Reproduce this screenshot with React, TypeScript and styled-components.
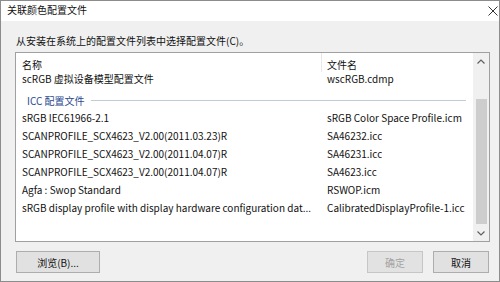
import React from "react";
import styled, { createGlobalStyle } from "styled-components";

const GlobalStyle = createGlobalStyle`
  html, body {
    margin: 0;
    padding: 0;
    background: #ffffff;
  }
  body {
    font-family: "Noto Sans CJK SC", "Noto Sans", sans-serif;
    font-size: 10px;
    color: #111111;
  }
  * {
    box-sizing: border-box;
  }
`;

const Window = styled.div`
  width: 500px;
  height: 282px;
  border: 1px solid #8c8c8c;
  background: #f0f0f0;
  display: flex;
  flex-direction: column;
  overflow: hidden;
`;

const TitleBar = styled.div`
  height: 20px;
  background: #ffffff;
  display: flex;
  align-items: center;
  justify-content: space-between;
  padding: 0 1px 3px 6px;
  font-size: 10px;
`;

const CloseIcon = styled.svg`
  display: block;
  margin-top: 2px;
`;

const Body = styled.div`
  flex: 1;
  display: flex;
  flex-direction: column;
  padding: 0 9px 0 14px;
`;

const Prompt = styled.div`
  margin: 13px 0 4px 1px;
  line-height: 14px;
`;

const ListBox = styled.div`
  height: 190px;
  border: 1px solid #a0a0a0;
  background: #ffffff;
  display: flex;
`;

const ListContent = styled.div`
  flex: 1;
  overflow: hidden;
`;

const Row = styled.div<{ $header?: boolean; $compact?: boolean }>`
  display: flex;
  height: ${(p) => (p.$header ? "19px" : p.$compact ? "14px" : "18px")};
  line-height: 14px;
  padding-top: ${(p) => (p.$header ? "5px" : "0")};
  align-items: ${(p) => (p.$header ? "flex-start" : "center")};
  white-space: nowrap;
`;

const NameCell = styled.div<{ $header?: boolean }>`
  width: 306px;
  flex: none;
  padding-left: 6px;
  overflow: hidden;
  align-self: stretch;
  border-right: ${(p) => (p.$header ? "1px solid #e8e8e8" : "none")};
  margin-top: ${(p) => (p.$header ? "-5px" : "0")};
  padding-top: ${(p) => (p.$header ? "5px" : "0")};
  display: flex;
  align-items: ${(p) => (p.$header ? "flex-start" : "center")};
`;

const FileCell = styled.div`
  padding-left: 5px;
  overflow: hidden;
`;

const GroupRow = styled.div`
  display: flex;
  align-items: center;
  height: 23px;
  padding: 5px 7px 0 11px;
  color: #2c4a8f;
`;

const GroupLine = styled.div`
  flex: 1;
  height: 0;
  margin: 1px 0 0 6px;
  border-top: 1px solid #c3cbd5;
`;

const Scrollbar = styled.div`
  width: 16px;
  background: #f0f0f0;
  display: flex;
  flex-direction: column;
`;

const ArrowButton = styled.div`
  height: 16px;
  display: flex;
  align-items: center;
  justify-content: center;
`;

const Track = styled.div`
  flex: 1;
  padding: 30px 2px 0 3px;
`;

const Thumb = styled.div`
  height: 125px;
  background: #cdcdcd;
`;

const Footer = styled.div`
  display: flex;
  justify-content: space-between;
  margin-top: 9px;
  padding: 0 1px;
`;

const ButtonGroup = styled.div`
  display: flex;
  gap: 10px;
`;

const Button = styled.button<{ $wide?: boolean }>`
  width: ${(p) => (p.$wide ? "84px" : "56px")};
  height: 22px;
  padding: 0;
  border: 1px solid ${(p) => (p.disabled ? "#c6c6c6" : "#adadad")};
  background: ${(p) => (p.disabled ? "#e2e2e2" : "#e1e1e1")};
  color: ${(p) => (p.disabled ? "#a3a3a3" : "#111111")};
  font-family: "Noto Sans CJK SC", "Noto Sans", sans-serif;
  font-size: 10px;
`;

const Chevron = ({ up }: { up?: boolean }) => (
  <svg width="8" height="5" viewBox="0 0 8 5">
    <path
      d={up ? "M0.5 4.5 L4 1 L7.5 4.5" : "M0.5 0.5 L4 4 L7.5 0.5"}
      fill="none"
      stroke="#606060"
      strokeWidth="1.2"
    />
  </svg>
);

const iccRows: [string, string][] = [
  ["sRGB IEC61966-2.1", "sRGB Color Space Profile.icm"],
  ["SCANPROFILE_SCX4623_V2.00(2011.03.23)R", "SA46232.icc"],
  ["SCANPROFILE_SCX4623_V2.00(2011.04.07)R", "SA46231.icc"],
  ["SCANPROFILE_SCX4623_V2.00(2011.04.07)R", "SA4623.icc"],
  ["Agfa : Swop Standard", "RSWOP.icm"],
  ["sRGB display profile with display hardware configuration dat...", "CalibratedDisplayProfile-1.icc"],
];

export default function App() {
  return (
    <>
      <GlobalStyle />
      <Window>
        <TitleBar>
          <span>关联颜色配置文件</span>
          <CloseIcon width="10" height="10" viewBox="0 0 10 10">
            <path d="M0.5 0.5 L9.5 9.5 M9.5 0.5 L0.5 9.5" stroke="#333" strokeWidth="1" />
          </CloseIcon>
        </TitleBar>
        <Body>
          <Prompt>从安装在系统上的配置文件列表中选择配置文件(C)。</Prompt>
          <ListBox>
            <ListContent>
              <Row $header>
                <NameCell $header>名称</NameCell>
                <FileCell>文件名</FileCell>
              </Row>
              <Row $compact>
                <NameCell>scRGB 虚拟设备模型配置文件</NameCell>
                <FileCell>wscRGB.cdmp</FileCell>
              </Row>
              <GroupRow>
                <span>ICC 配置文件</span>
                <GroupLine />
              </GroupRow>
              {iccRows.map(([name, file], i) => (
                <Row key={i}>
                  <NameCell>{name}</NameCell>
                  <FileCell>{file}</FileCell>
                </Row>
              ))}
            </ListContent>
            <Scrollbar>
              <ArrowButton>
                <Chevron up />
              </ArrowButton>
              <Track>
                <Thumb />
              </Track>
              <ArrowButton>
                <Chevron />
              </ArrowButton>
            </Scrollbar>
          </ListBox>
          <Footer>
            <Button $wide>浏览(B)...</Button>
            <ButtonGroup>
              <Button disabled>确定</Button>
              <Button>取消</Button>
            </ButtonGroup>
          </Footer>
        </Body>
      </Window>
    </>
  );
}
